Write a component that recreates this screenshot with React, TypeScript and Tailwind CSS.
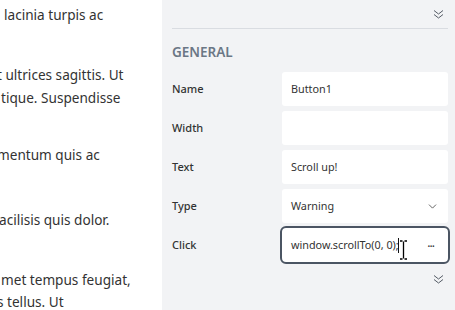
import { ChevronDown } from 'lucide-react';

const FONT = { fontFamily: '"Noto Sans", "Open Sans", sans-serif' };

function DoubleChevron() {
  return (
    <svg width="11" height="11" viewBox="0 0 11 11" className="text-[#555c66]">
      <path d="M1 1.5l4.5 3.5 4.5-3.5M1 5.5l4.5 3.5 4.5-3.5" stroke="currentColor" strokeWidth="1" fill="none" />
    </svg>
  );
}

function Field({ label, children }: { label: string; children: React.ReactNode }) {
  return (
    <div className="flex items-center h-[34px]">
      <div className="w-[110px] text-[11px] font-medium text-[#333]">{label}</div>
      {children}
    </div>
  );
}

function Box({ value = '', children }: { value?: string; children?: React.ReactNode }) {
  return (
    <div className="w-[166px] h-[34px] bg-white rounded-[3px] flex items-center pl-[9px] pr-[9px] text-[10.8px] text-[#333]">
      <span className="flex-1">{value}</span>
      {children}
    </div>
  );
}

export default function App() {
  return (
    <div className="flex w-[455px] h-[310px] overflow-hidden bg-white" style={FONT}>
      {/* document preview, scrolled sideways */}
      <div className="w-[162px] shrink-0 overflow-hidden text-[13.6px] text-[#333] whitespace-nowrap leading-[23px]">
        <div className="mt-[3px] ml-[4px]">lacinia turpis ac</div>
        <div className="mt-[37px] ml-[-3px]">t ultrices sagittis. Ut</div>
        <div className="ml-[1px]">tique. Suspendisse</div>
        <div className="mt-[34px] ml-[-3px]">mentum quis ac</div>
        <div className="mt-[42px] ml-[-1px]">acilisis quis dolor.</div>
        <div className="mt-[37px] ml-[1px]">met tempus feugiat,</div>
        <div className="ml-[-3px] leading-[22px]">s tellus. Ut</div>
      </div>

      {/* property panel */}
      <div className="flex-1 bg-[#f2f3f5] pl-[10px] pr-[7px] flex flex-col">
        <div className="h-[28px] flex items-center justify-end pr-[4px]">
          <DoubleChevron />
        </div>
        <div className="h-px bg-[#d9dce1]" />
        <div className="mt-[14px] h-[18px] text-[13.5px] font-semibold text-[#6b7785] leading-[18px]">GENERAL</div>
        <div className="mt-[11px] flex flex-col gap-[5px]">
          <Field label="Name">
            <Box value="Button1" />
          </Field>
          <Field label="Width">
            <Box />
          </Field>
          <Field label="Text">
            <Box value="Scroll up!" />
          </Field>
          <Field label="Type">
            <Box value="Warning">
              <ChevronDown size={13} strokeWidth={1.5} className="text-[#444]" />
            </Box>
          </Field>
          <Field label="Click">
            <div className="relative w-[166px] h-[34px] bg-white rounded-[4px] outline-2 outline-[#4b5563] flex items-center pl-[9px] pr-[14px] text-[10.8px] text-[#333]">
              <span>window.scrollTo(0, 0);</span>
              <span className="w-px h-[15px] bg-[#111] ml-[-1px]" />
              <span className="flex-1" />
              <span className="text-[12px] leading-none tracking-[-1px] mt-[-4px]">...</span>
              <svg className="absolute left-[117px] top-[12px]" width="9" height="20" viewBox="0 0 9 20">
                <path d="M1 1h2.5M5.5 1H8M4.5 1.5v17M1 19h2.5M5.5 19H8" stroke="#000" strokeWidth="1.3" fill="none" />
              </svg>
            </div>
          </Field>
        </div>
        <div className="mt-[12px] flex justify-end pr-[4px]">
          <DoubleChevron />
        </div>
      </div>
    </div>
  );
}
